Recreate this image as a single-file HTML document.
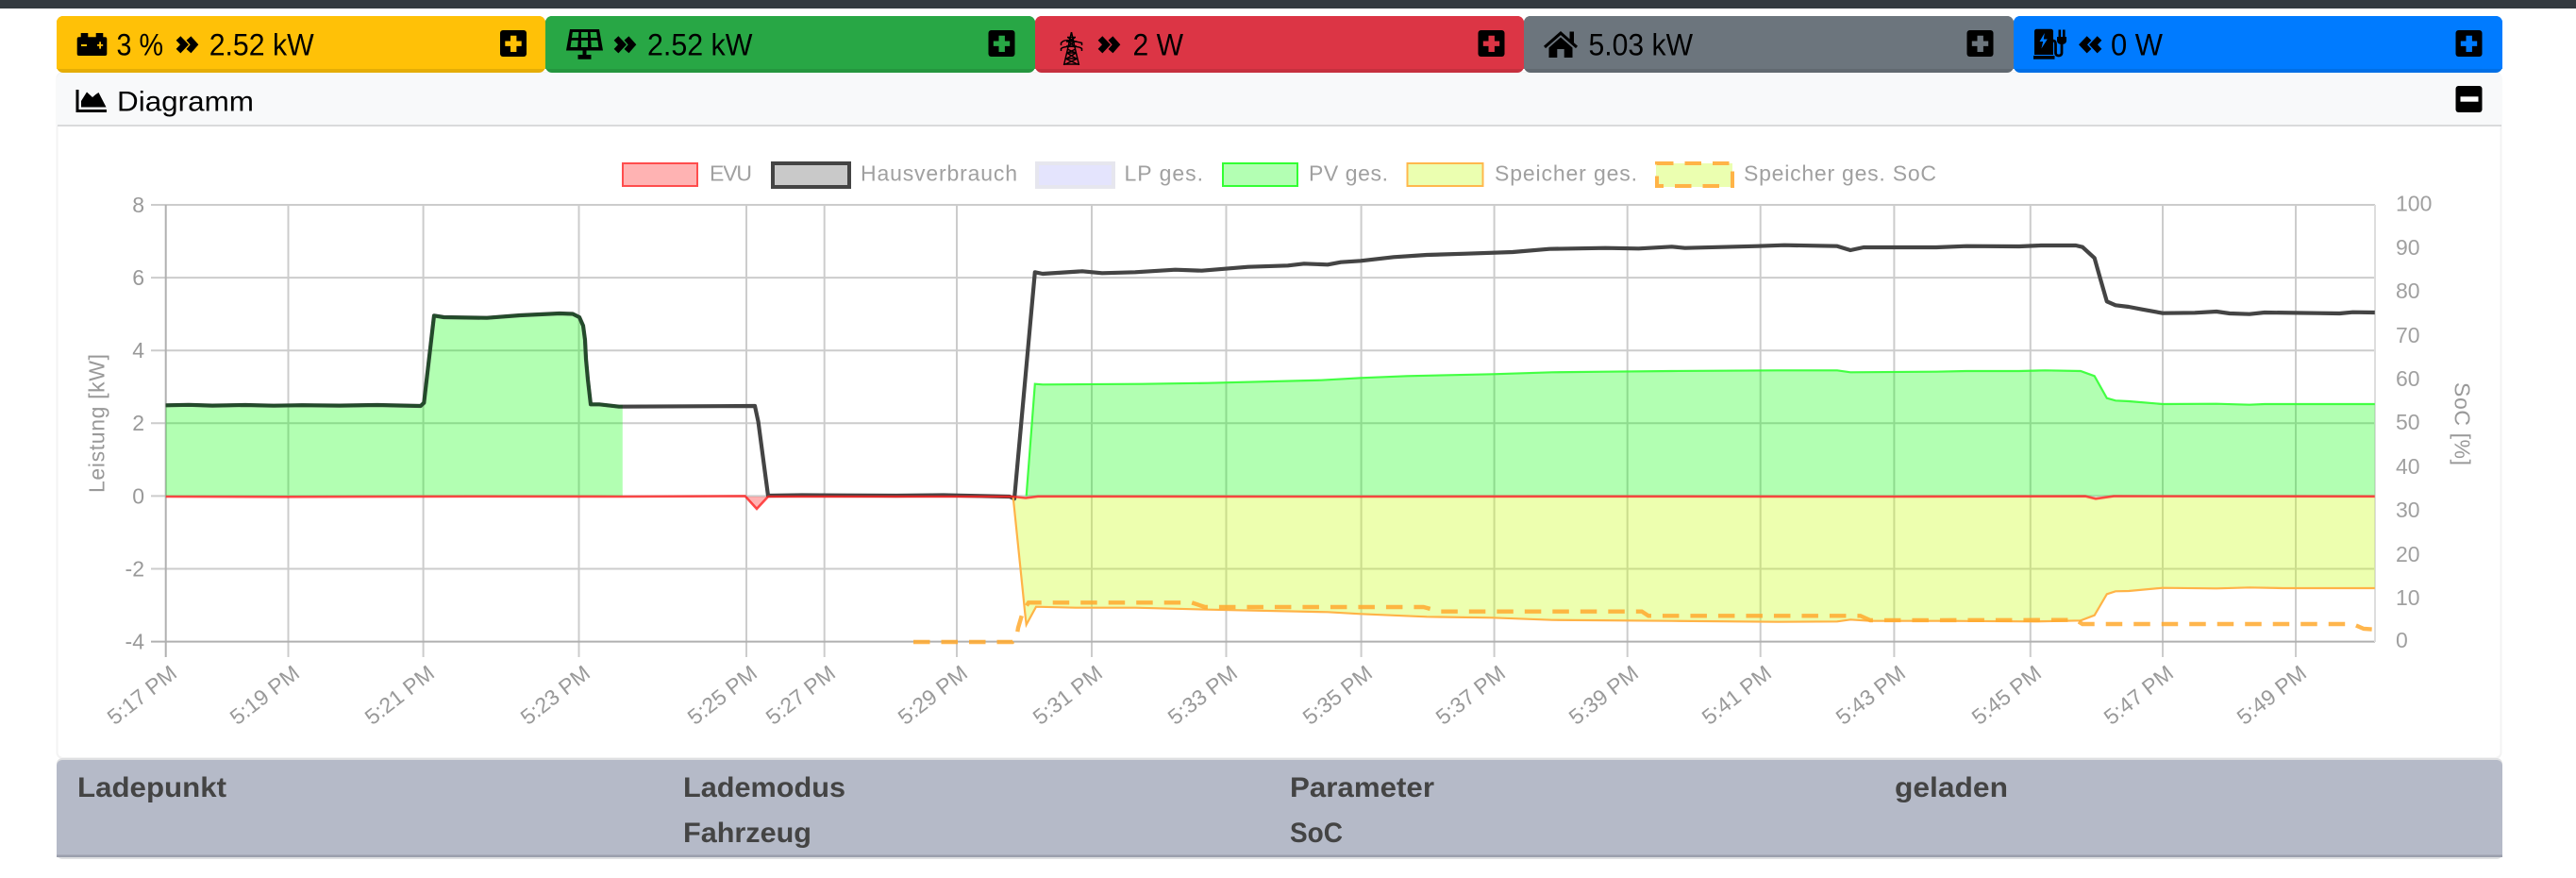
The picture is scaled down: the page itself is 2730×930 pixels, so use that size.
<!DOCTYPE html>
<html lang="de"><head><meta charset="utf-8"><title>Diagramm</title>
<style>
html,body{margin:0;padding:0;background:#fff;width:2730px;height:930px;overflow:hidden}
svg{display:block}
text{font-family:"Liberation Sans",sans-serif}
.b{font-size:32px;fill:#000}
.l{font-size:23px;fill:#a0a0a0}
.t{font-size:23px;fill:#999;text-anchor:end}
.h{font-size:30px;font-weight:700;fill:#444}
.g{stroke:#ccc;stroke-width:2;fill:none}
.c{fill:none;stroke:#000;stroke-width:6.5;stroke-linecap:butt;stroke-linejoin:miter}
</style></head><body>
<svg xmlns="http://www.w3.org/2000/svg" width="2730" height="930" viewBox="0 0 2730 930">
<rect width="2730" height="930" fill="#fff"/>
<rect width="2730" height="9" fill="#343a40"/>

<!-- card -->
<rect x="60.5" y="77" width="2590" height="726" rx="6" fill="#fff" stroke="#f3f3f3" stroke-width="2"/>
<path d="M60 133V84a7 7 0 0 1 7-7H2645a7 7 0 0 1 7 7V133Z" fill="#f8f9fa"/>
<rect x="61" y="132" width="2590" height="2" fill="#d9dadb"/>

<!-- buttons -->
<g>
<rect x="60" y="17" width="518" height="60" rx="7" fill="#e5ad06"/><path d="M60 73V24a7 7 0 0 1 7-7H571a7 7 0 0 1 7 7V73Z" fill="#ffc107"/>
<rect x="578" y="17" width="519" height="60" rx="7" fill="#24963e"/><path d="M578 73V24a7 7 0 0 1 7-7H1090a7 7 0 0 1 7 7V73Z" fill="#28a745"/>
<rect x="1097" y="17" width="518" height="60" rx="7" fill="#c6303e"/><path d="M1097 73V24a7 7 0 0 1 7-7H1608a7 7 0 0 1 7 7V73Z" fill="#dc3545"/>
<rect x="1615" y="17" width="519" height="60" rx="7" fill="#616970"/><path d="M1615 73V24a7 7 0 0 1 7-7H2127a7 7 0 0 1 7 7V73Z" fill="#6c757d"/>
<rect x="2134" y="17" width="518" height="60" rx="7" fill="#006fe6"/><path d="M2134 73V24a7 7 0 0 1 7-7H2645a7 7 0 0 1 7 7V73Z" fill="#007bff"/>
</g>

<!-- battery icon -->
<path d="M85.7 39.3V35h7.6v4.3h8.4V35h7.6v4.3h2a2 2 0 0 1 2 2V57a2 2 0 0 1-2 2H83.7a2 2 0 0 1-2-2V41.3a2 2 0 0 1 2-2Z" fill="#000"/>
<rect x="86" y="47" width="6" height="2" fill="#ffc107"/>
<path d="M103 47h2.2v-2.8h1.8V47h2.2v1.8H107v2.8h-1.8v-2.8H103Z" fill="#ffc107"/>
<text class="b" x="123.5" y="58.5" textLength="49.5" lengthAdjust="spacingAndGlyphs">3 %</text>
<path class="c" d="M189 40.5l6.5 6.8-6.5 6.8M200 40.5l6 6.8-6 6.8"/>
<text class="b" x="221.7" y="58.5" textLength="111" lengthAdjust="spacingAndGlyphs">2.52 kW</text>

<!-- solar icon -->
<path d="M604 31h31l4 22.5H600Z" fill="#000"/>
<g fill="#28a745"><path d="M606.8 34h6.6l-.5 6h-6.900ZM616 34h7v6h-7ZM625.600 34h6.600l.8 6h-6.900ZM605.600 42.700h7.100l-.5 7.300h-7.700ZM616 42.700h7v7.300h-7ZM626.300 42.700h7.100l1 7.300h-7.700Z"/></g>
<path d="M617.500 53.500h4v4.500h5v4.700h-14V58h5Z" fill="#000"/>
<path class="c" d="M653 40.500l6.500 6.800-6.500 6.800M664 40.500l6 6.800-6 6.800"/>
<text class="b" x="686" y="58.5" textLength="111.400" lengthAdjust="spacingAndGlyphs">2.52 kW</text>

<!-- pylon icon -->
<g fill="none" stroke="#000" stroke-width="1.500">
<path d="M1135.500 34L1131.500 52 1127.500 69M1135.500 34L1139.500 52 1143.500 69"/>
<path d="M1124.500 48v-2.500c3-3.500 6-4 22 0v2.500M1124.500 54v-2.500c3-3 19-3 22 0v2.500"/>
<path d="M1131 39.500h9M1130 44h11M1130 49h11M1130 56h11M1129 62h13M1128 68h15"/>
<path d="M1132 40l7 4M1139 40l-7 4M1132 44l7 5M1139 44l-7 5M1131 52l9 4M1140 52l-9 4M1130.500 56l10 6M1140.500 56l-10 6M1129 62l13 6M1142 62l-13 6"/>
</g>
<path class="c" d="M1166 40.500l6.500 6.800-6.500 6.800M1177 40.500l6 6.800-6 6.800"/>
<text class="b" x="1200.500" y="58.5" textLength="53.500" lengthAdjust="spacingAndGlyphs">2 W</text>

<!-- home icon -->
<path d="M1654 33l9.500 8.400V33.500h4.500v11.800l4 3.500-2 2.300-16-14-16 14-2-2.300Z" fill="#000"/>
<path d="M1654 39.500l12.500 11V61h-8.800V52h-7.400v9h-8.800V50.500Z" fill="#000"/>
<text class="b" x="1683.500" y="58.5" textLength="110.500" lengthAdjust="spacingAndGlyphs">5.03 kW</text>

<!-- charging station icon -->
<path d="M2158.500 30.700h15a2.500 2.500 0 0 1 2.500 2.500V58h-20V33.200a2.500 2.500 0 0 1 2.500-2.500Z" fill="#000"/>
<path d="M2166.800 35l-5.300 9h3.700l-1.800 7.500 6.400-10h-4Z" fill="#007bff"/>
<rect x="2155" y="59" width="22.500" height="3.700" fill="#000"/>
<path d="M2175 43c3 0 3.500 1 3.500 5v8c0 4 6.500 4 6.500 0V44" fill="none" stroke="#000" stroke-width="2.800"/>
<path d="M2180 39h10v4c0 2.500-2 4-5 4s-5-1.500-5-4Z" fill="#000"/>
<rect x="2181.500" y="31.500" width="2.600" height="8" fill="#000"/><rect x="2186" y="31.500" width="2.600" height="8" fill="#000"/>
<path class="c" d="M2214 40.500l-6.500 6.800 6.500 6.800M2225 40.500l-6.500 6.800 6.500 6.800"/>
<text class="b" x="2237" y="58.5" textLength="55" lengthAdjust="spacingAndGlyphs">0 W</text>

<!-- plus squares -->
<rect x="530" y="32" width="28" height="28" rx="3" fill="#000"/><path d="M541 37.700h6.400v5.800h5.300v5.400h-5.300V55H541v-6.100h-5.700v-5.400H541Z" fill="#ffc107"/>
<rect x="1047.500" y="32" width="28" height="28" rx="3" fill="#000"/><path d="M1058.500 37.700h6.400v5.800h5.300v5.400h-5.300V55h-6.400v-6.100h-5.700v-5.400h5.700Z" fill="#28a745"/>
<rect x="1566.500" y="32" width="28" height="28" rx="3" fill="#000"/><path d="M1577.500 37.700h6.400v5.800h5.300v5.400h-5.300V55h-6.400v-6.100h-5.700v-5.400h5.700Z" fill="#dc3545"/>
<rect x="2084.500" y="32" width="28" height="28" rx="3" fill="#000"/><path d="M2095.500 37.700h6.400v5.800h5.300v5.400h-5.300V55h-6.400v-6.100h-5.700v-5.400h5.700Z" fill="#6c757d"/>
<rect x="2602.500" y="32" width="28" height="28" rx="3" fill="#000"/><path d="M2613.500 37.700h6.400v5.800h5.300v5.400h-5.300V55h-6.400v-6.100h-5.700v-5.400h5.700Z" fill="#007bff"/>

<!-- Diagramm header -->
<path d="M80.500 95h3v21h29.500v3H80.500Z" fill="#000"/>
<path d="M86 113.500V107l6-9.500 6 5.500 3.500-3 3-2 8 15.500Z" fill="#000"/>
<text x="124" y="117.500" font-size="30" textLength="145" lengthAdjust="spacingAndGlyphs" fill="#000">Diagramm</text>
<rect x="2602.500" y="91" width="28" height="28" rx="3" fill="#000"/>
<rect x="2607.500" y="102.300" width="19" height="5.400" fill="#fff"/>

<!-- legend -->
<rect x="660" y="173" width="79" height="24" fill="#ffb3b3" stroke="#ff4d4d" stroke-width="2"/>
<text class="l" x="752" y="191.500" textLength="45">EVU</text>
<rect x="819" y="173" width="81" height="25" fill="#c9c9c9" stroke="#444" stroke-width="4"/>
<text class="l" x="912" y="191.500" textLength="166">Hausverbrauch</text>
<rect x="1099" y="173" width="81" height="25" fill="#e4e4fd" stroke="#e6e6ee" stroke-width="4"/>
<text class="l" x="1191.500" y="191.500" textLength="83.500">LP ges.</text>
<rect x="1296" y="173" width="79" height="24" fill="#b3ffb3" stroke="#3f3" stroke-width="2"/>
<text class="l" x="1387" y="191.500" textLength="84">PV ges.</text>
<rect x="1491.500" y="173" width="80" height="24" fill="#ebffb0" stroke="#ffb84d" stroke-width="2"/>
<text class="l" x="1584" y="191.500" textLength="151">Speicher ges.</text>
<rect x="1755" y="173" width="81" height="25" fill="#ebffb0"/>
<rect x="1756" y="173" width="80" height="24" fill="none" stroke="#ffb347" stroke-width="4" stroke-dasharray="17.500 12"/>
<text class="l" x="1848" y="191.500" textLength="204">Speicher ges. SoC</text>

<!-- grid -->
<g class="g">
<path d="M160 217H2517M160 294.100H2517M160 371.200H2517M160 448.300H2517M160 525.400H2517M160 602.500H2517"/>
<path d="M305.500 217V696M448.600 217V696M613.500 217V696M791 217V696M873.700 217V696M1014 217V696M1157 217V696M1299.500 217V696M1442.600 217V696M1583.600 217V696M1724.700 217V696M1865.700 217V696M2007.400 217V696M2151.800 217V696M2292 217V696M2433 217V696"/>
</g>
<path d="M160 679.600H2517" stroke="#b0b0b0" stroke-width="2" fill="none"/>
<path d="M175.700 217V696" stroke="#b0b0b0" stroke-width="2" fill="none"/>
<path d="M2517 217V680" stroke="#ddd" stroke-width="2" fill="none"/>

<!-- fills -->
<path fill="rgb(0,255,0)" fill-opacity=".3" d="M175.700 525.400V429.300L445.800 430 449.300 426.700 460 334.300 470.400 336 516 336.700 551 334 593 332 607 332.500 614 336 618 345 620 360 621 380 623 402 626 428.300 635 428.300 656 430.700 659.800 430.700V525.400Z"/>
<path fill="rgb(0,255,0)" fill-opacity=".3" d="M1087.700 525.400L1096.800 406.700 1105 407.300 1210 406.700 1280.600 405.700 1400 402.700 1442 400.300 1491 398.300 1582 396.300 1645 394.300 1701.500 393.700 1771.700 393 1884 392.300 1947 392.300 1961 394.300 2052 393.700 2084 393 2140 393 2167.600 392.300 2205 393 2219.700 398.300 2232.800 421.700 2242 424.300 2256 425 2292 428 2349 427.700 2384 428.700 2400 428 2516.800 428V525.400Z"/>
<path fill="rgb(200,255,13)" fill-opacity=".33" d="M1073.700 526.500L1084 626.700 1086 646.700 1087.700 661.700 1098 642.700 1140 643.700 1203 643.700 1280.600 645.700 1407 648.300 1442 650.300 1512 653.300 1582 654.300 1645 656.700 1771.700 657.700 1884 658.700 1947 658.300 1961 656.300 1982 657.700 2065 657.700 2158 658.300 2205 657.300 2219.700 651.700 2232.800 629.300 2242 626.300 2256 626 2292 622.700 2349 623.300 2384 622.300 2419 623 2516.800 623V526.500Z"/>
<path fill="rgb(255,0,0)" fill-opacity=".3" d="M789.600 526L802 539 814 526Z"/>

<!-- house line -->
<polyline fill="none" stroke="#444" stroke-width="4.200" stroke-linejoin="round" points="175.700,429.300 200,428.800 225,429.600 260,429 290,429.700 320,429.200 360,429.600 400,429 445.800,430 449.300,426.700 460,334.300 470.400,336 516,336.700 551,334 593,332 607,332.500 614,336 618,345 620,360 621,380 623,402 626,428.300 635,428.300 656,430.700 800,430 803.600,446.700 814,525 850,524.500 950,525 1000,524.500 1070,526 1075,528.300 1096.800,288.300 1105,290 1147,287.300 1168,289.300 1203,288.300 1245.500,285.700 1273.600,286.700 1322.700,282.700 1364.800,281.300 1382,279.300 1407,280.300 1421,277.700 1442,276.300 1477,272.300 1512,270 1554,268.700 1603,267 1642,263.700 1701.500,262.700 1736.600,263.300 1771.700,261.300 1785.700,262.700 1862.800,260.700 1891,259.700 1947,260.700 1961,265 1975,262 2052,262 2084,260.700 2140,261 2163,260 2200,260 2207,261.700 2219.700,273.300 2225.800,295 2232.800,319.300 2242,323.300 2256,325 2270,327.700 2292,331.700 2326,331.300 2349,330 2363,332 2384,332.700 2400,331 2456,331.700 2479.500,332 2493.500,330.700 2516.800,331"/>

<!-- PV line -->
<polyline fill="none" stroke="#33ff33" stroke-opacity=".9" stroke-width="2.200" points="1087.700,525.400 1096.800,406.700 1105,407.300 1210,406.700 1280.600,405.700 1400,402.700 1442,400.300 1491,398.300 1582,396.300 1645,394.300 1701.500,393.700 1771.700,393 1884,392.300 1947,392.300 1961,394.300 2052,393.700 2084,393 2140,393 2167.600,392.300 2205,393 2219.700,398.300 2232.800,421.700 2242,424.300 2256,425 2292,428 2349,427.700 2384,428.700 2400,428 2516.800,428"/>
<polyline fill="none" stroke="#1a4d24" stroke-opacity=".8" stroke-width="3.600" stroke-linejoin="round" points="175.700,429.300 200,428.800 225,429.600 260,429 290,429.700 320,429.200 360,429.600 400,429 445.800,430 449.300,426.700 460,334.300 470.400,336 516,336.700 551,334 593,332 607,332.500 614,336 618,345 620,360 621,380 623,402 626,428.300 635,428.300 656,430.700 659.800,430.700"/>

<!-- storage line -->
<polyline fill="none" stroke="#ffb347" stroke-width="2.200" points="1073.700,526.500 1084,626.700 1086,646.700 1087.700,661.700 1098,642.700 1140,643.700 1203,643.700 1280.600,645.700 1407,648.300 1442,650.300 1512,653.300 1582,654.300 1645,656.700 1771.700,657.700 1884,658.700 1947,658.300 1961,656.300 1982,657.700 2065,657.700 2158,658.300 2205,657.300 2219.700,651.700 2232.800,629.300 2242,626.300 2256,626 2292,622.700 2349,623.300 2384,622.300 2419,623 2516.800,623"/>

<!-- EVU line -->
<polyline fill="none" stroke="#ff2222" stroke-opacity=".8" stroke-width="2.600" points="175.700,526 300,526.300 500,525.800 659.800,526 789.600,525.400 802,539 814,526 1000,526 1073,526 1087,527.500 1100,525.800 1400,526 1700,525.800 2000,526 2210,525.600 2221,528.300 2240,525.600 2516.800,525.800"/>

<!-- SoC dashed -->
<polyline fill="none" stroke="#ffa92e" stroke-opacity=".85" stroke-width="4.400" stroke-dasharray="17.500 12" points="968,680 1073,680 1077,677 1079,665 1084,648 1090,638.300 1263,638.300 1277,643 1508.600,643 1526,647.700 1740,647.700 1747,652.300 1971.600,652.300 1982,657 2200,656.700 2207,661 2493.500,661 2505,666 2516.800,666.700"/>

<!-- left axis -->
<g>
<text class="t" x="153" y="225">8</text>
<text class="t" x="153" y="302">6</text>
<text class="t" x="153" y="379">4</text>
<text class="t" x="153" y="456">2</text>
<text class="t" x="153" y="533.500">0</text>
<text class="t" x="153" y="610.500">-2</text>
<text class="t" x="153" y="687.500">-4</text>
</g>
<text class="l" style="fill:#999" transform="translate(110.500 522) rotate(-90)" textLength="147">Leistung [kW]</text>

<!-- right axis -->
<g>
<text class="l" x="2539" y="223.500">100</text>
<text class="l" x="2539" y="270">90</text>
<text class="l" x="2539" y="316">80</text>
<text class="l" x="2539" y="363">70</text>
<text class="l" x="2539" y="409">60</text>
<text class="l" x="2539" y="455">50</text>
<text class="l" x="2539" y="502">40</text>
<text class="l" x="2539" y="548">30</text>
<text class="l" x="2539" y="595">20</text>
<text class="l" x="2539" y="641">10</text>
<text class="l" x="2539" y="686">0</text>
</g>
<text class="l" style="fill:#999" transform="translate(2601.500 405) rotate(90)" textLength="88">SoC [%]</text>

<!-- x labels -->
<g>
<text class="t" transform="translate(189 716) rotate(-38)">5:17 PM</text>
<text class="t" transform="translate(319 716) rotate(-38)">5:19 PM</text>
<text class="t" transform="translate(462 716) rotate(-38)">5:21 PM</text>
<text class="t" transform="translate(627 716) rotate(-38)">5:23 PM</text>
<text class="t" transform="translate(804 716) rotate(-38)">5:25 PM</text>
<text class="t" transform="translate(887 716) rotate(-38)">5:27 PM</text>
<text class="t" transform="translate(1027 716) rotate(-38)">5:29 PM</text>
<text class="t" transform="translate(1170 716) rotate(-38)">5:31 PM</text>
<text class="t" transform="translate(1313 716) rotate(-38)">5:33 PM</text>
<text class="t" transform="translate(1456 716) rotate(-38)">5:35 PM</text>
<text class="t" transform="translate(1597 716) rotate(-38)">5:37 PM</text>
<text class="t" transform="translate(1738 716) rotate(-38)">5:39 PM</text>
<text class="t" transform="translate(1879 716) rotate(-38)">5:41 PM</text>
<text class="t" transform="translate(2021 716) rotate(-38)">5:43 PM</text>
<text class="t" transform="translate(2165 716) rotate(-38)">5:45 PM</text>
<text class="t" transform="translate(2305 716) rotate(-38)">5:47 PM</text>
<text class="t" transform="translate(2446 716) rotate(-38)">5:49 PM</text>
</g>

<!-- bottom table header -->
<rect x="60" y="803" width="2592" height="107" rx="6" fill="#dfe0e2"/>
<path d="M60 906V811a6 6 0 0 1 6-6H2646a6 6 0 0 1 6 6V906Z" fill="#b5bac8"/>
<rect x="60" y="905.500" width="2592" height="2.500" fill="#9b9fad"/>
<text class="h" x="82" y="844" textLength="158" lengthAdjust="spacingAndGlyphs">Ladepunkt</text>
<text class="h" x="724" y="844" textLength="172" lengthAdjust="spacingAndGlyphs">Lademodus</text>
<text class="h" x="1367" y="844" textLength="153" lengthAdjust="spacingAndGlyphs">Parameter</text>
<text class="h" x="2008" y="844" textLength="120" lengthAdjust="spacingAndGlyphs">geladen</text>
<text class="h" x="724" y="892" textLength="136" lengthAdjust="spacingAndGlyphs">Fahrzeug</text>
<text class="h" x="1367" y="892" textLength="56" lengthAdjust="spacingAndGlyphs">SoC</text>
</svg>
</body></html>
